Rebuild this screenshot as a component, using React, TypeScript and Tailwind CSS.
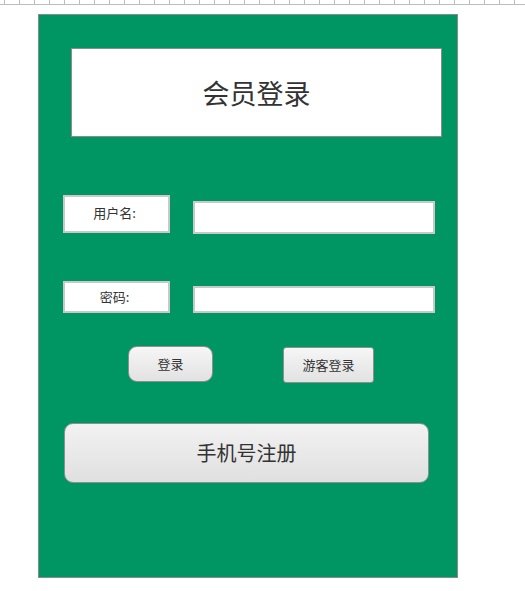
import React from 'react';

const font = { fontFamily: '"Noto Sans CJK SC", "Noto Sans", sans-serif' };

const Ruler: React.FC = () => {
  const ticks = Array.from({ length: 36 });
  return (
    <div className="h-[5px] border-b border-[#bdbdbd] flex pl-[4px]">
      {ticks.map((_, i) => (
        <div key={i} className="w-[15px] h-full border-l border-[#bdbdbd] shrink-0" />
      ))}
    </div>
  );
};

export default function App() {
  return (
    <div className="w-[525px] h-[591px] bg-white overflow-hidden text-[#333]" style={font}>
      <Ruler />
      <div className="ml-[38px] mt-[9px] w-[420px] h-[564px] bg-[#009664] border border-[#8a8a8a] flex flex-col">
        <div className="ml-[32px] mt-[33px] w-[371px] h-[89px] bg-white border border-[#8c8c8c] flex items-center justify-center">
          <span className="text-[27px] leading-none">会员登录</span>
        </div>

        <div className="flex items-start mt-[58px] ml-[24px]">
          <div className="w-[107px] h-[38px] bg-white border-2 border-[#c9c9c9] flex items-center justify-center text-[13px] pb-[2px] pr-[4px]">
            用户名:
          </div>
          <div className="ml-[23px] mt-[6px] w-[242px] h-[33px] bg-white border-2 border-[#c9c9c9]" />
        </div>

        <div className="flex items-start mt-[47px] ml-[24px]">
          <div className="w-[107px] h-[32px] bg-white border-2 border-[#c9c9c9] flex items-center justify-center text-[13px] pr-[4px]">
            密码:
          </div>
          <div className="ml-[23px] mt-[5px] w-[242px] h-[27px] bg-white border-2 border-[#c9c9c9]" />
        </div>

        <div className="flex items-start mt-[33px] ml-[89px]">
          <button className="w-[85px] h-[36px] rounded-[9px] border border-[#8f8f8f] bg-gradient-to-b from-[#f6f6f6] to-[#e2e2e2] text-[13px] flex items-center justify-center">
            登录
          </button>
          <button className="ml-[70px] mt-[1px] w-[91px] h-[36px] rounded-[3px] border border-[#8f8f8f] bg-gradient-to-b from-[#f6f6f6] to-[#e2e2e2] text-[13px] flex items-center justify-center">
            游客登录
          </button>
        </div>

        <button className="mt-[40px] ml-[25px] w-[365px] h-[60px] rounded-[9px] border border-[#8f8f8f] bg-gradient-to-b from-[#f2f2f2] to-[#e0e0e0] text-[20px] flex items-center justify-center">
          手机号注册
        </button>
      </div>
    </div>
  );
}
